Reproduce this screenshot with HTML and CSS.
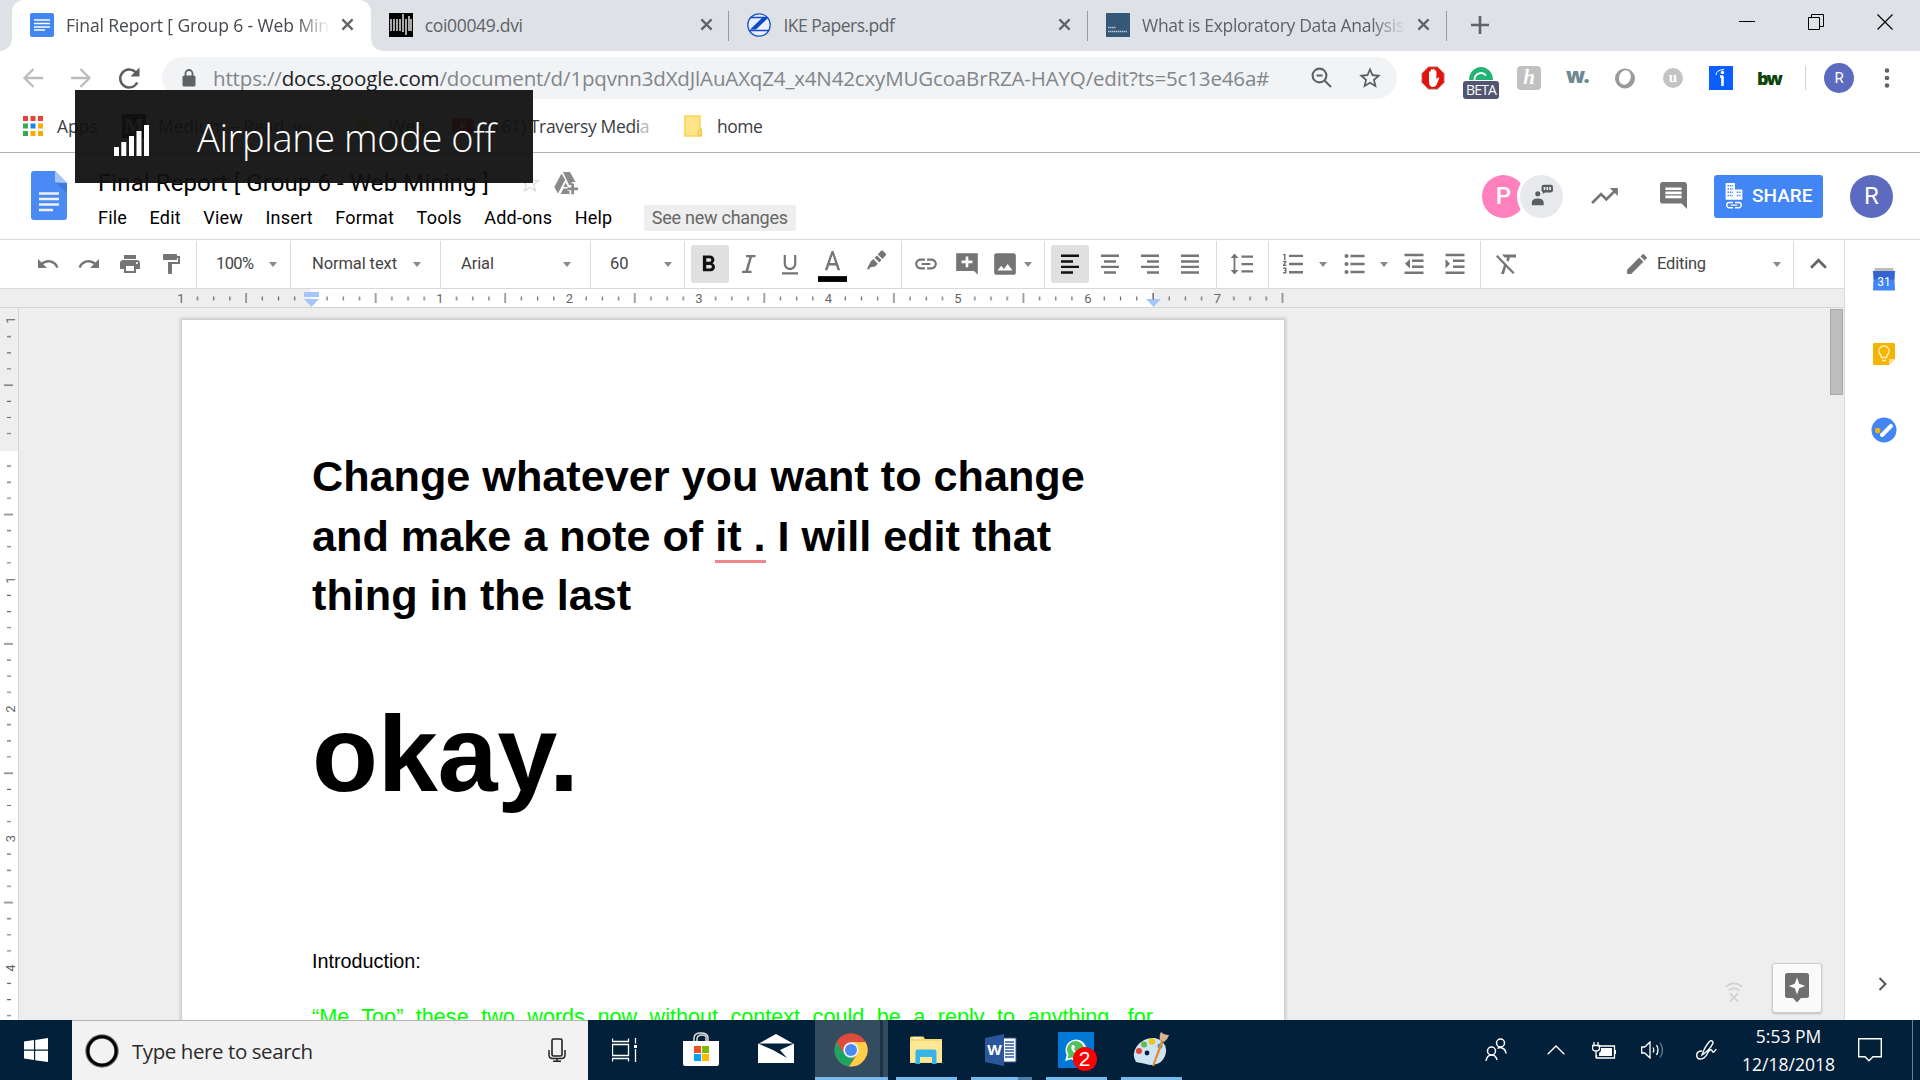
FILE: index.html
```html
<!DOCTYPE html>
<html lang="en">
<head>
<meta charset="utf-8">
<title>Final Report [ Group 6 - Web Mining ]</title>
<link rel="stylesheet" href="styles.css">
</head>
<body>
<svg class="defs" width="0" height="0">
  <symbol id="close" viewBox="0 0 14 14"><path d="M1.5 1.5l11 11M12.500 1.5l-11 11" stroke="#5f6368" stroke-width="2.400" fill="none"/></symbol>
  <symbol id="caret" viewBox="0 0 8 5"><path d="M0 0h8L4 5z" fill="#8a8a8a"/></symbol>
  <symbol id="folder" viewBox="0 0 18 22"><path d="M1 1h15v13h1.500v7H1z" fill="#ffe48c" stroke="#fcd34f" stroke-width="1.500"/><path d="M14 20v-4q1.500-2 3 0v4z" fill="#ffe48c" stroke="#e8bd2e"/></symbol>
</svg>

<header class="tabstrip">
  <div class="tab active">
    <svg class="fav" viewBox="0 0 24 24"><rect width="24" height="24" rx="2" fill="#4285f4"/><path d="M4 7h16M4 10.500h16M4 14h16M4 17h11" stroke="#fff" stroke-width="1.700"/></svg>
    <span class="tab-title fade t1">Final Report [ Group 6 - Web Min</span>
    <svg class="x"><use href="#close"/></svg>
  </div>
  <div class="tab">
    <svg class="fav" viewBox="0 0 24 24"><rect width="24" height="24"/><path d="M2 6v12M5 6v12M8 6v12M11 6v12M14 1v18M17 6v16M20 3v15M22 6v12" stroke="#fff" stroke-width="1.300"/></svg>
    <span class="tab-title t2">coi00049.dvi</span>
    <svg class="x"><use href="#close"/></svg>
  </div>
  <div class="tab">
    <svg class="fav" viewBox="0 0 24 24"><circle cx="12" cy="12" r="11.200" fill="#e9f0fb" stroke="#1a55c8" stroke-width="1.300"/><path d="M4 4.500h16M22 17.500H3" fill="none" stroke="#1048c8" stroke-width="1.500"/><path d="M15 5h6L9 16.500H3z" fill="#1048c8"/></svg>
    <span class="tab-title t3">IKE Papers.pdf</span>
    <svg class="x"><use href="#close"/></svg>
  </div>
  <div class="tab">
    <svg class="fav" viewBox="0 0 24 24"><rect width="24" height="24" fill="#355876"/><path d="M2 14.500h8M2 18.500h19" stroke="#b8c6d2" stroke-width="1.600" stroke-dasharray="1.500 .5"/></svg>
    <span class="tab-title fade t4">What is Exploratory Data Analysis</span>
    <svg class="x"><use href="#close"/></svg>
  </div>
  <svg class="newtab" viewBox="0 0 18 18"><path d="M9 0v18M0 9h18" stroke="#5f6368" stroke-width="2.600"/></svg>
  <div class="winctl">
    <svg viewBox="0 0 16 16"><path d="M0 7.500h16" stroke="#000"/></svg>
    <svg viewBox="0 0 16 16"><path d="M.5 3.500h11v12H.5zM3.500 3.500v-3h12v12h-4" fill="none" stroke="#000"/></svg>
    <svg viewBox="0 0 16 16"><path d="M.5.5l15 15M15.500.5l-15 15" stroke="#000" stroke-width="1.200"/></svg>
  </div>
</header>

<nav class="navbar">
  <svg class="nav" viewBox="0 0 24 24"><path d="M22 12H4M12.500 3L3.500 12l9 9" fill="none" stroke="#babcbe" stroke-width="2.300"/></svg>
  <svg class="nav" viewBox="0 0 24 24"><path d="M2 12h18M11.500 3l9 9-9 9" fill="none" stroke="#babcbe" stroke-width="2.300"/></svg>
  <svg class="nav" viewBox="0 0 24 24"><path d="M20.300 16.500A9 9 0 1 1 18.500 6" fill="none" stroke="#5a5d61" stroke-width="2.500"/><path d="M22.500 1.500v9h-9z" fill="#5a5d61"/></svg>
  <div class="omnibox">
    <svg class="lock" viewBox="0 0 14 18"><path d="M3.500 7V4.500a3.500 3.500 0 0 1 7 0V7" fill="none" stroke="#5f6368" stroke-width="1.800"/><rect x=".5" y="6.500" width="13" height="11" rx="1.500" fill="#5f6368"/></svg>
    <span class="url">https://<b>docs.google.com</b>/document/d/1pqvnn3dXdJlAuAXqZ4_x4N42cxyMUGcoaBrRZA-HAYQ/edit?ts=5c13e46a#</span>
    <svg class="mag" viewBox="0 0 22 22"><circle cx="8.500" cy="8.500" r="6.900" fill="none" stroke="#5f6368" stroke-width="2.100"/><path d="M13.500 13.500l6.500 6.500M5.500 8.500h6" stroke="#5f6368" stroke-width="2"/></svg>
    <svg class="star" viewBox="0 0 24 24"><path d="M22 9.240l-7.190-.62L12 2 9.190 8.630 2 9.240l5.460 4.730L5.820 21 12 17.270 18.180 21l-1.630-7.030L22 9.240zM12 15.400l-3.760 2.270 1-4.280-3.320-2.880 4.380-.38L12 6.100l1.710 4.040 4.380.38-3.320 2.880 1 4.280L12 15.400z" fill="#5a5d61"/></svg>
  </div>
  <div class="exts">
    <svg viewBox="0 0 24 24"><path d="M7.500.8h9l6.700 6.700v9l-6.700 6.700h-9L.8 16.500v-9z" fill="#e3120b" stroke="#a9a9a9" stroke-width=".8"/><path d="M8 15V6q1-1.500 1.700 0v4V4q1-1.500 1.900 0v5.500V3.500q1-1.500 1.900 0v6V5q1-1.500 1.900 0v8l2-1.500q1.500 0 .5 1.500l-2 5q-1 3-4 3-3.900 0-3.900-6z" fill="#fff"/></svg>
    <div class="beta"><svg viewBox="0 0 24 14"><path d="M0 14a12 13 0 0 1 24 0z" fill="#23b373"/><path d="M5.500 14a6.500 6.500 0 0 1 11.500-4.500" fill="none" stroke="#fff" stroke-width="1.800"/></svg><span>BETA</span></div>
    <div class="ext honey">h</div>
    <div class="ext wiki">w.</div>
    <svg viewBox="0 0 24 24"><ellipse cx="12" cy="12.500" rx="10" ry="10" fill="#9a9a9a"/><ellipse cx="12" cy="11.500" rx="5.800" ry="7.300" fill="#fff" transform="rotate(20 12 11)"/></svg>
    <div class="ext ublk">u</div>
    <svg viewBox="0 0 24 24"><rect width="24" height="24" fill="#0b5fff"/><path d="M13.500 10v10M11 10.500h3" stroke="#fff" stroke-width="2.600"/><circle cx="13.500" cy="6.500" r="1.700" fill="#fff"/><path d="M7 9q0-5 8-5.500" fill="none" stroke="#fff"/></svg>
    <div class="ext bw">bw</div>
  </div>
  <div class="profile">R</div>
  <svg class="dots" viewBox="0 0 6 20"><g fill="#5f6368"><circle cx="3" cy="2.500" r="2.300"/><circle cx="3" cy="10" r="2.300"/><circle cx="3" cy="17.500" r="2.300"/></g></svg>
</nav>

<div class="bookmarks">
  <svg class="apps" viewBox="0 0 20 20"><path d="M0 0h5v5H0zM7.500 0h5v5h-5zM15 0h5v5h-5z" fill="#ea4335"/><path d="M0 7.500h5v5H0zM0 15h5v5H0z" fill="#34a853"/><path d="M7.500 7.500h5v5h-5z" fill="#1a84e8"/><path d="M15 7.500h5v5h-5zM7.500 15h5v5h-5zM15 15h5v5h-5z" fill="#fbab00"/></svg>
  <span class="bm b-apps">Apps</span>
  <span class="medium">M</span>
  <span class="bm b-med fade">Medium – Read, writ</span>
  <svg class="fold" viewBox="0 0 18 22"><use href="#folder"/></svg>
  <span class="bm b-web">Web</span>
  <svg class="yt" viewBox="0 0 22 16"><rect width="22" height="16" rx="4" fill="#f00"/><path d="M8.500 4.500v7l6-3.500z" fill="#fff"/></svg>
  <span class="bm b-trav">(161) Traversy Medi<i>a</i></span>
  <svg class="fold" viewBox="0 0 18 22"><use href="#folder"/></svg>
  <span class="bm b-home">home</span>
</div>

<div class="dochead">
  <svg class="doclogo" viewBox="0 0 36 49"><path d="M3 0h21l12 12v34q0 3-3 3H3q-3 0-3-3V3Q0 0 3 0z" fill="#4a8af4"/><path d="M24 0l12 12H26q-2 0-2-2z" fill="#a6c5fa"/><path d="M36 12v10L25 11.500z" fill="#3f78dd"/><path d="M8 22.500h20M8 28h20M8 33.500h20M8 39h14" stroke="#f1f1f1" stroke-width="2.600"/></svg>
  <div class="headtext">
    <div class="titlerow"><span class="title">Final Report [ Group 6 - Web Mining ]</span>
      <svg class="tstar" viewBox="0 0 20 20"><path d="M10 1l2.300 6.300 6.700.2-5.300 4.100L15.600 18 10 14.200 4.400 18l1.900-6.400L1 7.500l6.700-.2z" fill="none" stroke="#ddd" stroke-width="1.300"/></svg>
      <svg class="drive" viewBox="0 0 24 23"><g fill="#8a8a8a"><path d="M7.500 1.500l3.700 6.300L4 21.500.3 15z"/><path d="M9 0h7l5.500 10h-3.700v3H15z"/><path d="M6.500 22l3-5.500h4V19h2v3z"/><path d="M9.500 15l2.300-4.500 2 4.500z"/><path d="M17.300 11.500h2.700v4h4v2.700h-4v4h-2.700v-4h-4v-2.700h4z"/></g></svg>
    </div>
    <div class="menu"><span>File</span><span>Edit</span><span>View</span><span>Insert</span><span>Format</span><span>Tools</span><span>Add-ons</span><span>Help</span><span class="newch">See new changes</span></div>
  </div>
  <div class="headright">
    <div class="av pink">P</div>
    <div class="av anon"><svg viewBox="0 0 26 26"><g fill="#5a5d61"><circle cx="8" cy="11.500" r="3"/><path d="M1 25v-3q0-5 7-5t7 5v3z"/><rect x="12.500" y="1" width="13.500" height="9" rx="2.500"/><path d="M14 12V8h4z"/></g><path d="M15 3.500h2v3.500h-2zM18.300 3.500h2v3.500h-2zM21.600 3.500h2v3.500h-2z" fill="#e8e9ed"/></svg></div>
    <svg class="trend" viewBox="2 6 20 12"><path d="M16 6l2.290 2.290-4.880 4.880-4-4L2 16.590 3.410 18l6-6 4 4 6.300-6.290L22 12V6z" fill="#757575"/></svg>
    <svg class="cmt" viewBox="2 2 20 20"><path d="M21.990 4c0-1.100-.89-2-1.990-2H4c-1.100 0-2 .9-2 2v12c0 1.100.9 2 2 2h14l4 4-.01-18zM18 14H6v-2h12v2zm0-3H6V9h12v2zm0-3H6V6h12v2z" fill="#757575"/></svg>
    <div class="share"><svg viewBox="0 0 18 28"><path d="M0 0h10v7h8v11H0z" fill="#fff"/><path d="M2 3h6M2 6.500h6M2 10h6M2 13.500h6M12 10h4M12 13.500h4" stroke="#4285f4" stroke-width="1.500" stroke-dasharray="1.600 1"/><path d="M8 21H4a2.800 2.800 0 0 0 0 5.600H8M10 21h4a2.800 2.800 0 0 1 0 5.600H10M5.500 23.800h7" fill="none" stroke="#fff" stroke-width="1.500"/></svg><span>SHARE</span></div>
    <div class="av me">R</div>
  </div>
</div>

<div class="workspace">
<div class="editor">
  <div class="toolbar">
    <div class="grp g1">
      <svg viewBox="0 0 24 24"><path d="M12.500 8c-2.650 0-5.050.99-6.900 2.600L2 7v9h9l-3.620-3.620c1.390-1.160 3.160-1.880 5.120-1.880 3.540 0 6.550 2.310 7.600 5.500l2.370-.78C21.080 11.030 17.150 8 12.500 8z"/></svg>
      <svg viewBox="0 0 24 24"><path d="M18.400 10.600C16.550 8.990 14.150 8 11.500 8c-4.650 0-8.580 3.030-9.960 7.220L3.900 16c1.050-3.190 4.050-5.500 7.600-5.500 1.950 0 3.730.72 5.120 1.880L13 16h9V7l-3.600 3.600z"/></svg>
      <svg viewBox="0 0 24 24"><path d="M19 8H5c-1.660 0-3 1.340-3 3v6h4v4h12v-4h4v-6c0-1.660-1.340-3-3-3zm-3 11H8v-5h8v5zm3-7c-.55 0-1-.45-1-1s.45-1 1-1 1 .45 1 1-.45 1-1 1zm-1-9H6v4h12V3z"/></svg>
      <svg viewBox="0 0 24 24"><path d="M18 4V3c0-.55-.45-1-1-1H5c-.55 0-1 .45-1 1v4c0 .55.45 1 1 1h12c.55 0 1-.45 1-1V6h1v4H9v11c0 .55.450 1 1 1h2c.55 0 1-.45 1-1v-9h8V4h-3z"/></svg>
    </div>
    <div class="grp sel g2"><span>100%</span><svg class="car"><use href="#caret"/></svg></div>
    <div class="grp sel g3"><span>Normal text</span><svg class="car"><use href="#caret"/></svg></div>
    <div class="grp sel g4"><span>Arial</span><svg class="car"><use href="#caret"/></svg></div>
    <div class="grp sel g5"><span>60</span><svg class="car"><use href="#caret"/></svg></div>
    <div class="grp g6">
      <div class="on"><svg viewBox="0 0 24 24"><path d="M15.600 10.790c.97-.67 1.650-1.770 1.650-2.790 0-2.260-1.750-4-4-4H7v14h7.040c2.090 0 3.710-1.700 3.710-3.790 0-1.520-.86-2.820-2.150-3.420zM10 6.500h3c.83 0 1.500.67 1.500 1.500s-.67 1.500-1.500 1.500h-3v-3zm3.500 9H10v-3h3.500c.83 0 1.500.67 1.500 1.500s-.67 1.500-1.500 1.500z"/></svg></div>
      <svg viewBox="0 0 24 24"><path d="M9 3v2.300h3.400L8.500 18.700H5V21h9.500v-2.300h-3.400l3.900-13.400h3.500V3z"/></svg>
      <svg viewBox="0 0 24 24"><path d="M12 18c3.500 0 6.300-2.800 6.300-6.300V3h-2.200v8.700c0 2.400-1.900 4.100-4.100 4.100s-4.100-1.700-4.100-4.100V3H5.700v8.700C5.700 15.200 8.500 18 12 18zm-8 2.300v2.200h16v-2.200H4z"/></svg>
      <svg class="acol" viewBox="0 0 30 34"><path d="M14 2L7 22h2.700l1.700-5h7.200l1.700 5H23L16 2zm-1.800 12.500L15 6l2.800 8.500z"/><path d="M0 28h30v6H0z" fill="#000"/></svg>
      <svg class="hl" viewBox="0 0 24 24"><path d="M2 22l4-8 3-3 5 5-3 3-5 1-1.500 2zM10.500 9.500L13 7l5 5-2.500 2.500zM14 6l3.500-4q1-1 2 0l3 3q1 1 0 2L19 11z"/></svg>
    </div>
    <div class="grp g7">
      <svg viewBox="0 0 24 24"><path d="M3.900 12c0-1.710 1.390-3.100 3.100-3.100h4V7H7c-2.760 0-5 2.240-5 5s2.240 5 5 5h4v-1.900H7c-1.710 0-3.100-1.390-3.100-3.100zM8 13h8v-2H8v2zm9-6h-4v1.900h4c1.710 0 3.100 1.390 3.100 3.100s-1.390 3.100-3.100 3.100h-4V17h4c2.760 0 5-2.240 5-5s-2.240-5-5-5z"/></svg>
      <svg viewBox="0 0 24 24"><path d="M21.990 2H2v16.500h16.500L22 22zM17 11.200h-3.800V15h-2.400v-3.800H7V8.800h3.800V5h2.400v3.800H17z"/></svg>
      <svg viewBox="0 0 24 24"><path d="M22 20V4c0-1.100-.9-2-2-2H4c-1.100 0-2 .9-2 2v16c0 1.100.9 2 2 2h16c1.100 0 2-.9 2-2zM8.500 13.500l2.500 3.010L14.500 12l4.500 6H5l3.500-4.500z"/></svg>
      <svg class="car"><use href="#caret"/></svg>
    </div>
    <div class="grp g8">
      <div class="on"><svg viewBox="0 0 24 24"><path d="M3 2.500h18v2.500H3zM3 8.300h12v2.400H3zM3 13.700h18v2.400H3zM3 19.300h12v2.400H3z"/></svg></div>
      <svg viewBox="0 0 24 24"><path d="M3 2.500h18v2.500H3zM6 8.300h12v2.400H6zM3 13.700h18v2.400H3zM6 19.300h12v2.400H6z"/></svg>
      <svg viewBox="0 0 24 24"><path d="M3 2.500h18v2.500H3zM9 8.300h12v2.400H9zM3 13.700h18v2.400H3zM9 19.300h12v2.400H9z"/></svg>
      <svg viewBox="0 0 24 24"><path d="M3 2.500h18v2.500H3zM3 8.300h18v2.400H3zM3 13.700h18v2.400H3zM3 19.300h18v2.400H3z"/></svg>
    </div>
    <div class="grp g9"><svg viewBox="0 0 24 24"><path d="M5.400 6h3L4.500 1.500.6 6h3v12h-3l3.900 4.500L8.400 18h-3zM11.500 3.500h11.500v2.300H11.500zM11.500 10.900h11.500v2.300H11.500zM11.500 18.300h11.500v2.300H11.500z"/></svg></div>
    <div class="grp g10">
      <svg viewBox="0 0 24 24"><path d="M2 17h2v.9H3v1.200h1v.9H2v1.500h3.500V15.500H2zM3 8h1.500V2H2v1.200h1zM2 10h2L2 12.500V14h3.500v-1.400H3.700L5.500 10.500V8.800H2zM8 2.700h14v2.400H8zM8 10.800h14v2.400H8zM8 19h14v2.400H8z"/></svg>
      <svg class="car"><use href="#caret"/></svg>
      <svg viewBox="0 0 24 24"><circle cx="4.500" cy="4" r="2"/><circle cx="4.500" cy="12" r="2"/><circle cx="4.500" cy="20" r="2"/><path d="M8.500 2.800h14v2.400h-14zM8.500 10.800h14v2.400h-14zM8.500 18.800h14v2.400h-14z"/></svg>
      <svg class="car"><use href="#caret"/></svg>
      <svg viewBox="0 0 24 24"><path d="M2.500 1.800h19v2.500h-19zM10 7.500h11.500v2.400H10zM10 13.500h11.500v2.400H10zM2.500 19.500h19v2.500h-19zM3 11.800l5-4.800v9.600z"/></svg>
      <svg viewBox="0 0 24 24"><path d="M2.500 1.800h19v2.500h-19zM10 7.500h11.500v2.400H10zM10 13.500h11.500v2.400H10zM2.500 19.500h19v2.500h-19zM7 11.800L2.500 7v9.600z"/></svg>
    </div>
    <div class="grp g11">
      <svg viewBox="0 0 24 24"><path d="M3.500 3l17 17.500-1.500 1.500-7-7-2 7H7l3-9L2 4.500zM8 2.500h14v3h-6l-1.700 4.500-2-2 .9-2.500h-2.700z"/></svg>
      <svg class="pen" viewBox="2 2 20 20"><path d="M3 17.250V21h3.750L17.810 9.940l-3.750-3.750L3 17.250zM20.710 7.040c.39-.39.39-1.020 0-1.410l-2.340-2.340c-.39-.39-1.020-.39-1.410 0l-1.830 1.830 3.750 3.750 1.830-1.830z"/></svg>
      <span class="editing">Editing</span><svg class="car"><use href="#caret"/></svg>
    </div>
    <div class="grp g12"><svg viewBox="0 0 16 10"><path d="M1 9l7-7 7 7" fill="none" stroke="#666" stroke-width="2.600"/></svg></div>
  </div>
  <svg class="hruler" width="1844" height="18">
    <defs><pattern id="tick" x="181.300" y="0" width="129.550" height="19" patternUnits="userSpaceOnUse"><path d="M16.200 7.500v4M32.400 7.500v4M48.600 7.500v4M64.800 4v10M81 7.500v4M97.200 7.500v4M113.400 7.500v4" stroke="#666" stroke-width="1.200"/></pattern></defs>
    <rect width="1844" height="18" fill="#eee"/><rect x="311" width="842" height="18" fill="#fff"/>
    <rect x="182" width="1103" height="18" fill="url(#tick)"/>
    <g class="num"><text x="181" y="14">1</text><text x="440" y="14">1</text><text x="569.500" y="14">2</text><text x="699" y="14">3</text><text x="828.500" y="14">4</text><text x="958" y="14">5</text><text x="1088" y="14">6</text><text x="1217.500" y="14">7</text></g>
    <path d="M304 3h15v5h-15zM304 10h15L311.500 18zM1146 10h15l-7.500 8z" fill="#a5c5fb"/><path d="M1153.500 4v7" stroke="#777"/>
  </svg>
  <div class="canvas">
    <svg class="vruler" width="18" height="713">
      <defs><pattern id="vtick" x="0" y="12.400" width="18" height="129.350" patternUnits="userSpaceOnUse"><path d="M7 16.200h4M7 32.400h4M7 48.500h4M4 64.700h9M7 80.900h4M7 97h4M7 113.200h4" stroke="#666" stroke-width="1.200"/></pattern></defs>
      <rect width="18" height="143" fill="#eee"/><rect y="143" width="18" height="570" fill="#fff"/><rect y="13" width="18" height="700" fill="url(#vtick)"/>
      <g class="num"><text transform="translate(15 12) rotate(-90)">1</text><text transform="translate(15 272) rotate(-90)">1</text><text transform="translate(15 401) rotate(-90)">2</text><text transform="translate(15 530.500) rotate(-90)">3</text><text transform="translate(15 660) rotate(-90)">4</text></g>
    </svg>
    <article class="page">
      <h1>Change whatever you want to change<br>and make a note of <u>it .</u> I will edit that<br>thing in the last</h1>
      <p class="okay">okay.</p>
      <p class="intro">Introduction:</p>
      <p class="green">“Me Too” these two words now without context could be a reply to anything, for</p>
    </article>
    <div class="float">
      <svg class="wifi" viewBox="0 0 20 22"><path d="M1 5q9-7 18 0M4 9.500q6-5 12 0M5.500 12.500l9 9M14.500 12.500l-9 9" fill="none" stroke="#d0d0d0" stroke-width="1.800"/></svg>
      <div class="explore"><svg viewBox="0 0 24 30"><path d="M2.500 0h19Q24 0 24 2.500v20q0 2.500-2.500 2.500H16l-4 4.500L8 25H2.500Q0 25 0 22.500v-20Q0 0 2.500 0z" fill="#6f6f6f"/><path d="M12 4.500l2.200 6.300 6 2.200-6 2.200L12 21.500l-2.200-6.300-6-2.200 6-2.200z" fill="#fff"/></svg></div>
    </div>
    <div class="scroll"></div>
  </div>
</div>
<aside class="side">
  <svg viewBox="0 0 24 24"><path d="M2.500 1h19v4h-19z" fill="#bdbdbd"/><path d="M1 4h22l-.5 9H1.500z" fill="#3364cf"/><path d="M1.500 12.500h21l.5 11H1z" fill="#4285f4"/><text x="12" y="19" text-anchor="middle" class="cal">31</text></svg>
  <svg viewBox="0 0 24 24"><path d="M2.500 1h19q1.500 0 1.500 1.500V17l-6 6H2.500Q1 23 1 21.500v-19Q1 1 2.500 1z" fill="#f4b400"/><path d="M17 23v-6h6z" fill="#fbe19a"/><path d="M9.500 15.500q0-2-1.500-3.500a5 5 0 1 1 8 0q-1.500 1.500-1.500 3.500zM10 18.500h4" fill="none" stroke="#fff1c4" stroke-width="1.400"/></svg>
  <svg class="tasks" viewBox="0 0 26 26"><circle cx="13" cy="13" r="12.500" fill="#4285f4"/><circle cx="6.700" cy="13.500" r="2.700" fill="#f4b400"/><path d="M11 18l9-9" stroke="#fff" stroke-width="4" stroke-linecap="round"/></svg>
  <svg class="chev" viewBox="0 0 9 14"><path d="M1.500 1l6 6-6 6" fill="none" stroke="#555" stroke-width="2"/></svg>
</aside>
</div>

<footer class="taskbar">
  <div class="start"><svg viewBox="0 0 24 24"><path d="M0 3.500l10-1.400v9.400H0zM11.200 1.900L24 0v11.500H11.200zM0 12.700h10v9.300L0 20.600zM11.200 12.700H24V24l-12.800-1.800z" fill="#fff"/></svg></div>
  <div class="search">
    <svg class="ring" viewBox="0 0 34 34"><circle cx="17" cy="17" r="14.500" fill="none" stroke="#777" stroke-width="4.500"/><circle cx="17" cy="17" r="14.200" fill="none" stroke="#000" stroke-width="3"/></svg>
    <span class="st">Type here to search</span>
    <svg class="mic" viewBox="0 0 18 24"><rect x="4" y="1" width="10" height="17" rx="1.500" fill="none" stroke="#222" stroke-width="1.600"/><path d="M1 12v5q0 3.500 3.500 3.500h9q3.500 0 3.500-3.500v-5M9 20.500V23M5 23.200h8" fill="none" stroke="#222" stroke-width="1.500"/></svg>
  </div>
  <div class="tb tv"><svg viewBox="0 0 26 24"><path d="M.5.5v3h16v-3M.5 6.500h16v11H.5zM.5 23.500v-3h16v3M23.500 0v5.500M23.500 11v13" fill="none" stroke="#fff" stroke-width="1.300"/><path d="M22 7h3v3h-3z" fill="#fff"/></svg></div>
  <div class="tb store"><svg viewBox="0 0 36 34"><path d="M11 11V6q0-5 7-5t7 5v5M14 11V7q0-4 5-4t4 4v4" fill="none" stroke="#ddd" stroke-width="1.500"/><path d="M0 9h36v23q0 2-2 2H2q-2 0-2-2z" fill="#fff"/><path d="M11 14h7v7h-7z" fill="#f25022"/><path d="M19 14h7v7h-7z" fill="#7fba00"/><path d="M11 22h7v7h-7z" fill="#00a4ef"/><path d="M19 22h7v7h-7z" fill="#ffb900"/></svg></div>
  <div class="tb mail"><svg viewBox="0 0 36 29"><path d="M0 10L18 0l18 10v19H0z" fill="#fff"/><path d="M0 9.500h36L22 16l7 8-14-8z" fill="#02203a"/></svg></div>
  <div class="tb chrome"><svg viewBox="0 0 34 34"><circle cx="17" cy="17" r="16.500" fill="#dd4b3e"/><path d="M17 17L2.700 8.700A16.500 16.500 0 0 0 15 33.400L23 20z" fill="#1da462"/><path d="M17 9h14.500A16.500 16.500 0 0 1 15 33.400L24 20z" fill="#ffcd46"/><path d="M2.700 8.700A16.500 16.500 0 0 1 31.500 9H17L9 20z" fill="#dd4b3e"/><circle cx="17" cy="17" r="7.700" fill="#f1f1f1"/><circle cx="17" cy="17" r="6" fill="#4a8af5"/></svg></div>
  <div class="tb expl"><svg viewBox="0 0 32 28"><path d="M0 2Q0 .5 1.500.5h12L15 3h17v24H0z" fill="#f8d775"/><path d="M0 5h32v21.500H0z" fill="#ffe793"/><path d="M3 2h8" stroke="#fff" stroke-width="1.200"/><path d="M5.500 15.500q0-2 2-2h17q2 0 2 2V28H22v-7H10v7H5.500z" fill="#39b4ea"/></svg></div>
  <div class="tb word"><svg viewBox="0 0 32 32"><path d="M18 4h13v24H18z" fill="#fff" stroke="#2b579a"/><path d="M20 8h9M20 11h9M20 14h9M20 17h9M20 20h9M20 23h9" stroke="#2b579a" stroke-width="1.300"/><path d="M0 4l19-4v32L0 28z" fill="#2b579a"/><text x="9.500" y="21" text-anchor="middle" class="w">W</text></svg></div>
  <div class="tb wa"><div class="tile"><svg viewBox="0 0 24 24"><path d="M1 23l1.700-6A10.500 10.500 0 1 1 7 21.300z" fill="#fff"/><path d="M3.500 20.500l1-4A8.600 8.600 0 1 1 8 19.500z" fill="#4fc35a"/><path d="M8 7q-2 4 2 7.500t7 2.500l1-2.500-3-1.500-1.500 1.500q-2.500-1-3.500-3.500l1-1.500L10 7z" fill="#fff"/></svg><span class="badge">2</span></div></div>
  <div class="tb paint"><svg viewBox="0 0 36 36"><path d="M3 30Q-2 22 4 14 11 5 22 6q12 3 11 14-2 12-14 13-4 0-6-1-5-1-10-2z" fill="#cfe3f1"/><circle cx="6" cy="19" r="3" fill="#e5433a"/><circle cx="11" cy="12.500" r="3" fill="#62bb46"/><circle cx="19" cy="9.500" r="3.200" fill="#f3c318"/><circle cx="27" cy="14" r="2.500" fill="#3f8fdd"/><circle cx="14" cy="21" r="2.400" fill="#02203a"/><path d="M19 34L28 9l2.500 1L21 34z" fill="#e08a2c"/><path d="M27 8q-1-5 1-8 3 3 8 3-1 4-5 7z" fill="#d8b48c"/></svg></div>
  <div class="tray">
    <svg class="people" viewBox="0 0 22 24"><g fill="none" stroke="#fff" stroke-width="1.500"><circle cx="15.500" cy="5" r="4"/><circle cx="6.500" cy="13" r="4"/><path d="M1 23q1-6 5.500-6t5.500 5M12.500 10.500q2-1.500 4.500-.5 3.500 1 4 5.500"/></g></svg>
    <svg class="up" viewBox="0 0 18 10"><path d="M.7 9.300L9 1l8.300 8.300" fill="none" stroke="#fff" stroke-width="1.400"/></svg>
    <svg class="bat" viewBox="0 0 24 17"><path d="M6 4h16.500v12H4.500v-3M23.500 8v4M2 0v3M6 0v3M.5 3.500h7V7Q7 9 4 9 .5 9 .5 6zM4 9v7" fill="none" stroke="#fff" stroke-width="1.300"/><path d="M9 6h11v8H7v-3l2-2z" fill="#fff"/></svg>
    <svg class="vol" viewBox="0 0 23 18"><path d="M.7 6h3L9 1v16l-5.300-5h-3zM12 6.500q1.500 2.500 0 5M15.500 4q3 5 0 10" fill="none" stroke="#fff" stroke-width="1.300"/><path d="M19 1.500q5 7.500 0 15" fill="none" stroke="#6b7f90" stroke-width="1.300"/></svg>
    <svg class="ink" viewBox="0 0 21 20"><path d="M6 15Q9 6 14 1q3-1 3 2-3 7-11 12zM6 11q-5 0-5.300 4 0 4 3.500 4 5 0 8-7 3-4 4-1t4-2" fill="none" stroke="#fff" stroke-width="1.400"/></svg>
    <div class="clock"><span>5:53 PM</span><span>12/18/2018</span></div>
    <svg class="ac" viewBox="0 0 24 24"><path d="M.7.7h22.600v18H15l-4 4-4-4H.7z" fill="none" stroke="#fff" stroke-width="1.400"/></svg>
    <div class="peek"></div>
  </div>
</footer>

<div class="toast">
  <svg viewBox="0 0 35 31"><path d="M0 22h5v9H0zM7.300 17h5v14h-5zM15 11h5v20h-5zM22.500 6h5v25h-5zM30 0h5v31h-5z" fill="#fff"/></svg>
  <span>Airplane mode off</span>
</div>
</body>
</html>
```
FILE: styles.css
```css
* { box-sizing: border-box; }
body { margin: 0; width: 1920px; height: 1080px; overflow: hidden; background: #fff; font-family: Roboto, sans-serif; position: relative; display: flex; flex-direction: column; }
svg { display: block; flex: none; }
.defs { position: absolute; }
.fade { overflow: hidden; -webkit-mask-image: linear-gradient(90deg, #000 calc(100% - 34px), transparent); mask-image: linear-gradient(90deg, #000 calc(100% - 34px), transparent); }

/* tab strip */
.tabstrip { height: 51px; flex: none; background: #dee1e6; display: flex; align-items: center; padding-left: 12px; font: 17.500px "Open Sans", sans-serif; color: #5f6368; }
.tab { width: 358.700px; height: 51px; display: flex; align-items: center; padding: 0 17px 2px 18px; background: linear-gradient(#999ca0, #999ca0) right 11px / 1px 30px no-repeat; }
.tab.active { background: #fff; border-radius: 12px 12px 0 0; color: #45494d; position: relative; }
.tab.active::before, .tab.active::after { content: ""; position: absolute; bottom: 0; width: 12px; height: 12px; }
.tab.active::before { left: -12px; background: radial-gradient(circle at 0 0, transparent 11.500px, #fff 12px); }
.tab.active::after { right: -12px; background: radial-gradient(circle at 100% 0, transparent 11.500px, #fff 12px); }
.fav { width: 24px; height: 24px; margin-right: 12px; }
.tab-title { width: 264px; white-space: nowrap; margin-right: 11px; flex: none; }
.t1 { letter-spacing: -.1px; }
.t2 { letter-spacing: -.32px; }
.t3 { letter-spacing: -.5px; }
.t4 { letter-spacing: -.31px; }
.x { width: 13px; height: 13px; }
.newtab { width: 18px; height: 18px; margin: -2px 0 0 24px; }
.winctl { display: flex; gap: 53px; margin: -8px 27px 0 auto; }
.winctl svg { width: 16px; height: 16px; }

/* address row */
.navbar { height: 54px; flex: none; display: flex; align-items: center; padding-left: 21px; }
.nav { width: 24px; height: 24px; margin-right: 24px; }
.omnibox { width: 1235px; height: 42px; border-radius: 21px; background: #f1f3f4; margin-left: -3px; padding-left: 20px; display: flex; align-items: center; }
.lock { width: 14px; height: 18px; margin-right: 17px; }
.url { width: 1061px; font: 20.500px "Open Sans", sans-serif; letter-spacing: -.15px; color: #80868b; white-space: nowrap; }
.url b { font-weight: 400; color: #202124; }
.mag { width: 22px; height: 22px; margin-left: 37px; }
.star { width: 26px; height: 26px; margin-left: 24px; }
.exts { display: flex; align-items: center; justify-content: space-between; width: 360px; height: 42px; margin-left: 24px; }
.exts > svg { width: 24px; height: 24px; }
.beta { width: 36px; height: 42px; padding-top: 9px; margin: 0 -6px; display: flex; flex-direction: column; align-items: center; }
.beta svg { width: 24px; height: 14px; }
.beta span { width: 36px; height: 18px; margin-top: 1px; border-radius: 3px; background: #505672; color: #fff; font: 14px/18px "Open Sans", sans-serif; letter-spacing: -.8px; text-align: center; }
.ext { width: 24px; height: 24px; text-align: center; }
.honey { background: #c1c1c1; border-radius: 4px; color: #fff; font: italic 700 21px/22px "Liberation Serif", serif; }
.wiki { font: 800 21px/18px "Open Sans", sans-serif; color: #6e8791; letter-spacing: -1.500px; }
.ublk { width: 20px; height: 20px; margin: 0 2px; border-radius: 50%; background: #c4c4c4; color: #fff; font: 700 15px/19px "Liberation Serif", serif; }
.bw { font: 800 18px/24px "Open Sans", sans-serif; color: #0a450a; letter-spacing: -2px; }
.profile { width: 30px; height: 30px; border-radius: 50%; background: #5c6bc0; color: #fff; font-size: 15px; line-height: 30px; text-align: center; margin-left: 43px; position: relative; }
.profile::before { content: ""; position: absolute; left: -19px; top: 3px; width: 1px; height: 24px; background: #cfd1d4; }
.dots { width: 6px; height: 20px; margin-left: 30px; }

/* bookmarks */
.bookmarks { height: 48px; flex: none; border-bottom: 1px solid #b1b1b1; display: flex; align-items: center; padding: 0 0 6px 23px; color: #3c4043; font: 17.500px "Open Sans", sans-serif; }
.bm { white-space: nowrap; flex: none; }
.apps { width: 20px; height: 20px; margin-right: 14px; }
.medium { width: 24px; height: 24px; background: #111; color: #fff; text-align: center; font: 700 20px/24px "Liberation Serif", serif; margin-left: 25px; }
.b-apps { width: 40px; }
.b-med { width: 170px; margin: 0 10px 0 12px; }
.fold { width: 18px; height: 22px; margin: 0 15px 0 18px; }
.b-web { width: 63px; }
.yt { width: 22px; height: 16px; margin-right: 13px; }
.b-trav { width: 164px; letter-spacing: -.35px; }
.b-trav i { font-style: normal; color: #b5b7b9; }
.b-home { letter-spacing: -.5px; }
.bookmarks .fold:last-of-type { margin-left: 33px; }

/* document header */
.dochead { height: 87px; flex: none; border-bottom: 1px solid #dadada; display: flex; padding-left: 31px; }
.doclogo { width: 36px; height: 49px; margin-top: 18px; }
.headtext { margin-left: 31px; padding-top: 14px; }
.titlerow { display: flex; align-items: center; height: 32px; }
.title { font-size: 24px; letter-spacing: .1px; width: 390px; white-space: nowrap; color: #000; }
.tstar { width: 20px; height: 20px; margin-left: 32px; }
.drive { width: 24px; height: 23px; margin-left: 14px; }
.menu { display: flex; align-items: center; height: 36px; font-size: 18px; letter-spacing: .22px; color: #000; gap: 22.400px; white-space: nowrap; }
.newch { background: #eee; border-radius: 2px; height: 26px; line-height: 26px; width: 152px; padding-left: 8px; margin: 2px 0 0 9px; letter-spacing: -.25px; color: #666; }
.headright { margin: 22px 27px 0 auto; display: flex; align-items: flex-start; }
.av { width: 43px; height: 43px; border-radius: 50%; color: #fff; text-align: center; font-size: 24px; line-height: 43px; }
.pink { background: #ff80bd; font-weight: 500; }
.anon { background: #e8e9ed; margin-left: -5px; box-shadow: 0 0 0 3px #fff; padding: 9px; }
.anon svg { width: 26px; height: 22px; }
.me { background: #5c6bc0; margin-left: 27px; }
.trend { width: 27px; height: 16px; margin: 13px 0 0 28px; }
.cmt { width: 27px; height: 27px; margin: 7px 0 0 42px; }
.share { width: 109px; height: 43px; margin-left: 27px; background: #4285f4; border-radius: 3px; color: #fff; font-size: 19px; font-weight: 500; display: flex; padding-left: 11px; line-height: 41px; }
.share svg { width: 18px; height: 26px; margin: 8px 9px 0 0; }

/* editor */
.workspace { flex: 1; min-height: 0; display: flex; }
.editor { width: 1845px; display: flex; flex-direction: column; border-right: 1px solid #d8d8e0; }
.toolbar { height: 49px; flex: none; border-bottom: 1px solid #d9d9d9; display: flex; padding-top: 1px; }
.grp { height: 47px; border-right: 1px solid #dcdcdc; padding-bottom: 2px; display: flex; align-items: center; flex: none; color: #444; fill: #757575; font-size: 16.500px; letter-spacing: -.1px; }
.grp svg { width: 24px; height: 24px; }
.grp .car { width: 8px; height: 5px; margin-top: 1px; }
.sel { justify-content: space-between; padding-left: 21px; padding-right: 13px; white-space: nowrap; }
.g1 { width: 197px; padding-left: 36px; gap: 17px; }
.g2 { width: 94px; padding-left: 19px; letter-spacing: -.6px; }
.g3 { width: 150px; padding-right: 19px; }
.g4 { width: 150px; padding-left: 20px; padding-right: 19px; }
.g5 { width: 94px; padding-left: 19px; padding-right: 12px; }
.on { width: 38px; height: 38px; border-radius: 3px; background: #e0e0e0; display: flex; align-items: center; justify-content: center; fill: #111; }
.g6 { width: 217px; padding-left: 6px; }
.g6 svg + svg { margin-left: 17px; }
.g6 .on + svg { margin-left: 8px; }
.g6 .on svg { width: 27px; height: 27px; margin: 2px 3px 0 0; }
.g6 svg.acol { width: 29px; height: 33px; margin: 3px 0 0 16px; }
.g6 svg.hl { width: 22px; height: 22px; margin: -8px 0 0 18px; }
.g7 { width: 143px; padding-left: 11px; gap: 15px; }
.g7 svg { width: 26px; height: 26px; }
.g7 svg:nth-child(3) { margin-left: -3px; }
.g7 .car { margin-left: -9px; }
.g8 { width: 172px; padding-left: 6px; gap: 16px; }
.g8 .on { margin-right: -7px; }
.g9 { width: 52px; padding-left: 13px; }
.g10 { width: 212px; padding-left: 12px; }
.g10 svg:nth-child(2) { margin-left: 14px; }
.g10 svg:nth-child(3) { margin-left: 15px; }
.g10 svg:nth-child(4) { margin-left: 14px; }
.g10 svg:nth-child(5) { margin-left: 14px; }
.g10 svg:nth-child(6) { margin-left: 17px; }
.g11 { width: 313px; padding-left: 13px; }
.g11 .pen { width: 22px; height: 22px; margin: 0 9px 0 108px; }
.editing { width: 51px; letter-spacing: -.2px; }
.g11 .car { margin-left: 65px; }
.g12 { width: 51px; border: 0; padding-left: 16px; }
.g12 svg { width: 17px; height: 11px; }
.hruler { height: 18px; }
.num { font: 13px Roboto, sans-serif; fill: #666; text-anchor: middle; }
.canvas { flex: 1; min-height: 0; border-top: 1px solid #d5d5d5; background: #eee; position: relative; display: flex; overflow: hidden; }
.vruler { border-right: 1px solid #d5d5d5; width: 19px; }
.page { width: 1104px; height: 1400px; margin: 11px 0 0 162px; background: #fff; border: 1px solid #d0d0d0; box-shadow: 0 0 3px 1px rgba(0,0,0,.15); padding: 127px 131px 0 130px; font-family: "Liberation Sans", Arial, sans-serif; color: #000; }
h1 { margin: 0; font-size: 43.200px; line-height: 59.600px; white-space: nowrap; }
h1 u { text-decoration: none; border-bottom: 3px solid #f0868a; }
.okay { margin: 66px 0 0; font-size: 108px; font-weight: 700; line-height: 124px; letter-spacing: -.3px; }
.intro { margin: 132px 0 0; font-size: 19.800px; line-height: 27px; }
.green { margin: 27px 0 0; font-size: 21.600px; line-height: 29px; color: #0f0; text-align: justify; text-align-last: justify; }
.float { position: absolute; right: 22px; bottom: 7px; display: flex; align-items: center; gap: 29px; }
.wifi { width: 18px; height: 20px; margin-top: 8px; }
.explore { width: 50px; height: 50px; border-radius: 3px; background: #fafafa; border: 1px solid #ccc; box-shadow: 0 1px 2px rgba(0,0,0,.2); display: flex; align-items: center; justify-content: center; }
.explore svg { width: 24px; height: 30px; }
.scroll { position: absolute; right: 1px; top: 1px; width: 13px; height: 86px; background: #bdbdbd; border: 1px solid #a9a9a9; }
.side { flex: 1; display: flex; flex-direction: column; align-items: center; padding: 27px 0 0 3px; }
.side svg { width: 24px; height: 24px; margin-bottom: 51px; }
.side .tasks { width: 26px; height: 26px; }
.side .chev { width: 9px; height: 14px; margin: auto 3px 29px 0; }
.cal { font: 12px Roboto, sans-serif; fill: #fff; }

/* taskbar */
.taskbar { height: 60px; flex: none; background: #02203a; display: flex; }
.start { width: 72px; padding: 18px 0 0 24px; }
.start svg { width: 24px; height: 24px; }
.search { width: 516px; background: #f2f2f2; border-top: 1px solid #b5b5b5; display: flex; align-items: center; padding-left: 13px; color: #2b2b2b; font: 20.500px "Open Sans", sans-serif; letter-spacing: -.42px; }
.ring { width: 34px; height: 34px; margin-right: 13px; }
.st { width: 181px; white-space: nowrap; }
.mic { width: 18px; height: 24px; margin: -2px 0 0 235px; }
.tb { width: 61px; height: 60px; margin-right: 14px; display: flex; align-items: center; justify-content: center; position: relative; flex: none; }
.tv { margin-left: 7px; padding-right: 2px; }
.tv svg { width: 26px; height: 24px; }
.store svg { width: 36px; height: 34px; margin-top: -2px; }
.mail svg { width: 36px; height: 29px; margin-top: -3px; }
.tb.chrome { width: 73px; margin: 0 8px 0 -5px; padding-right: 2px; background: linear-gradient(90deg, #344c60 65px, #1a3348 65px 68px, #344c60 68px); }
.chrome svg { width: 34px; height: 34px; }
.expl, .word, .wa, .paint { padding-right: 2px; }
.expl svg { width: 32px; height: 28px; }
.word svg { width: 32px; height: 32px; }
.w { font: 700 15px "Open Sans", sans-serif; fill: #fff; }
.chrome::after, .expl::after, .word::after, .wa::after, .paint::after { content: ""; position: absolute; left: 0; right: 0; bottom: 0; height: 3px; background: #76b9ed; }
.word::after { background: linear-gradient(90deg, #76b9ed 47px, #4a7da6 47px); }
.tile { width: 36px; height: 36px; background: #0078d7; padding: 6px; position: relative; }
.tile svg { width: 24px; height: 24px; }
.badge { position: absolute; left: 15px; top: 15px; width: 24px; height: 24px; border-radius: 50%; background: #f00; color: #fff; font: 21px/24px "Liberation Sans", sans-serif; text-align: center; }
.paint svg { width: 36px; height: 36px; }
.tray { margin-left: auto; display: flex; align-items: center; color: #fff; font: 17.500px "Open Sans", sans-serif; }
.people { width: 22px; height: 24px; margin-right: 40px; }
.up { width: 18px; height: 10px; margin-right: 27px; }
.bat { width: 24px; height: 17px; margin-right: 25px; }
.vol { width: 23px; height: 18px; margin-right: 32px; }
.ink { width: 21px; height: 20px; margin-right: 25px; }
.clock { width: 93px; display: flex; flex-direction: column; align-items: center; line-height: 28px; margin-right: 23px; white-space: nowrap; }
.ac { width: 24px; height: 24px; margin-right: 30px; }
.peek { width: 8px; height: 60px; border-left: 1px solid #6f8292; }

/* airplane mode flyout */
.toast { position: absolute; left: 75px; top: 90px; width: 458px; height: 93px; background: rgba(17,17,17,.95); color: #fff; font: 300 38px/95px "Open Sans", sans-serif; letter-spacing: -.4px; display: flex; padding-left: 39px; white-space: nowrap; }
.toast svg { width: 35px; height: 31px; margin: 35px 48px 0 0; }
```
